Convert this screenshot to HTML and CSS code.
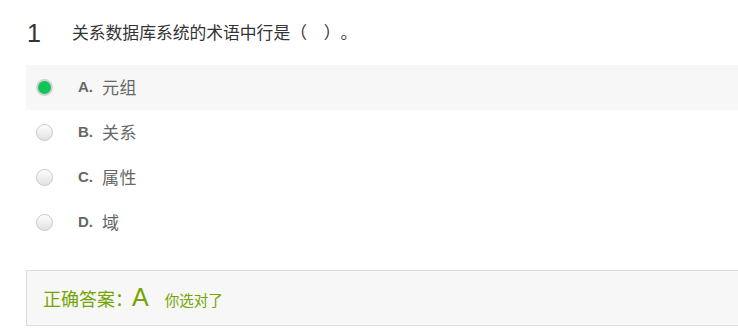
FILE: index.html
```html
<!DOCTYPE html>
<html lang="zh">
<head>
<meta charset="utf-8">
<link rel="stylesheet" href="styles.css">
</head>
<body>
<div class="quiz">
  <div class="question">
    <span class="qnum">1</span>
    <span class="qtext">关系数据库系统的术语中行是（ ）。</span>
  </div>
  <ul class="options">
    <li class="option selected"><span class="radio checked"></span><span class="letter">A.</span><span class="otext">元组</span></li>
    <li class="option"><span class="radio"></span><span class="letter">B.</span><span class="otext">关系</span></li>
    <li class="option"><span class="radio"></span><span class="letter">C.</span><span class="otext">属性</span></li>
    <li class="option"><span class="radio"></span><span class="letter">D.</span><span class="otext">域</span></li>
  </ul>
  <div class="answer">
    <span class="alabel">正确答案：</span><span class="aletter">A</span><span class="aresult">你选对了</span>
  </div>
</div>
</body>
</html>
```
FILE: styles.css
```css
html, body {
  margin: 0;
  padding: 0;
  background: #fff;
}
body {
  font-family: "Liberation Sans", "Noto Sans CJK SC", sans-serif;
  overflow: hidden;
  text-spacing-trim: space-all;
}
.quiz {
  padding: 15px 0 0 26px;
}
.question {
  display: flex;
  align-items: center;
  height: 36px;
  margin-bottom: 14px;
}
.qnum {
  font-size: 25px;
  color: #333;
  width: 45px;
  padding-left: 1px;
  line-height: 36px;
  padding-bottom: 1px;
}
.qtext {
  font-family: "Noto Sans CJK SC", sans-serif;
  font-size: 16.8px;
  color: #333;
  line-height: 36px;
  padding-bottom: 3px;
  word-spacing: 13px;
  font-feature-settings: "halt" 0, "chws" 0;
}
.options {
  list-style: none;
  margin: 0;
  padding: 0;
}
.option {
  display: flex;
  align-items: center;
  height: 45px;
  padding-left: 10px;
}
.option.selected {
  background: #f7f7f7;
}
.radio {
  width: 15px;
  height: 15px;
  border-radius: 50%;
  border: 1px solid #c9c9c9;
  background: linear-gradient(#fdfdfd, #e2e2e2);
  flex: none;
}
.radio.checked {
  width: 13px;
  height: 13px;
  border: 2px solid #d2d2d2;
  background: #10c55a;
}
.letter {
  margin-left: 25px;
  font-weight: bold;
  font-size: 15px;
  color: #666;
  width: 24px;
  padding-bottom: 2px;
}
.otext {
  font-family: "Noto Sans CJK SC", sans-serif;
  font-size: 17px;
  letter-spacing: 0.5px;
  color: #666;
  padding-bottom: 3px;
}
.answer {
  margin-top: 25px;
  height: 54px;
  border: 1px solid #dcdcdc;
  border-right: none;
  background: #f7f7f7;
  display: flex;
  align-items: center;
  padding-left: 16px;
  color: #74a500;
  font-family: "Noto Sans CJK SC", sans-serif;
}
.alabel {
  font-size: 18px;
}
.aletter {
  font-family: "Liberation Sans", sans-serif;
  font-size: 25px;
  margin-left: -1px;
  margin-right: 16px;
  padding-bottom: 2px;
}
.aresult {
  font-size: 14.5px;
  padding-top: 3px;
}
```
